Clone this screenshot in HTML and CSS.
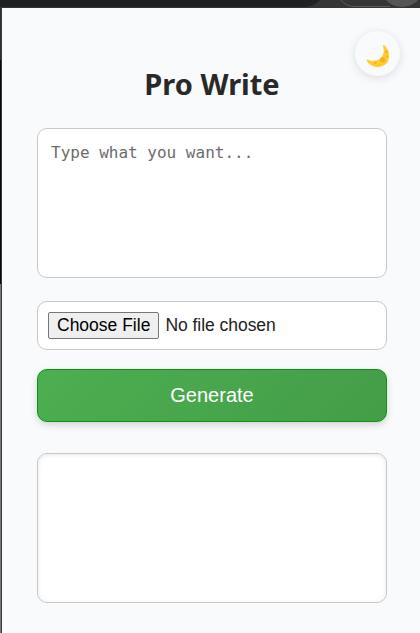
FILE: index.html
```html
<!DOCTYPE html>
<html lang="en">
<head>
<meta charset="utf-8">
<title>Pro Write</title>
<link rel="stylesheet" href="styles.css">
</head>
<body>
<svg class="browser-bar" viewBox="0 0 420 8" aria-hidden="true">
  <rect width="420" height="8" fill="#353535"/>
  <path d="M0 0H320Q314 7 304 7H0Z" fill="#202124"/>
  <path d="M341 0Q346 6.5 354 6.5H390" fill="none" stroke="#5b5b5b"/>
  <ellipse cx="402" cy="-8" rx="19" ry="15" fill="#555"/>
</svg>
<div class="window">
  <div class="window-edge"></div>
  <main class="popup">
    <button class="theme-toggle" aria-label="Toggle theme">
      <svg viewBox="0 0 24 24" width="24" height="24">
        <path d="M18.1 1.1C25.2 7.6 24.3 17.5 18.5 21.1C12.2 25.2 3 22.3 0.7 16.5C.4 15.5 1.5 15.4 2.6 15.9C7.4 17.7 12.6 16.7 15.4 13.2C18.1 9.8 18.2 6.2 17.1 2.3C16.9 1.2 17.4.6 18.1 1.1Z" fill="#ffce2e"/>
        <g fill="#f4b321">
          <circle cx="16.7" cy="16" r="2.7"/>
          <circle cx="9.3" cy="19" r="1.6"/>
          <circle cx="20.5" cy="7.9" r="1.4"/>
          <circle cx="21" cy="12.5" r="1"/>
          <circle cx="13" cy="21" r=".8"/>
        </g>
      </svg>
    </button>
    <h1 class="title">Pro Write</h1>
    <textarea class="field prompt" placeholder="Type what you want..."></textarea>
    <input class="field upload" type="file">
    <button class="generate">Generate</button>
    <div class="field output"></div>
  </main>
</div>
</body>
</html>
```

FILE: styles.css
```css
* {
  box-sizing: border-box;
}

body {
  display: flex;
  flex-direction: column;
  height: 633px;
  margin: 0;
  overflow: hidden;
  font-family: "Liberation Sans", Arial, sans-serif;
}

.browser-bar {
  display: block;
  flex: none;
  width: 420px;
  height: 8px;
}

.window {
  display: flex;
  flex: 1;
}

.window-edge {
  width: 2px;
  background: linear-gradient(#303134 0 52px, #08090b 52px 276px, #77787b 276px);
  border-right: 1px solid #38393b;
}

.popup {
  position: relative;
  display: flex;
  flex: 1;
  flex-direction: column;
  padding: 52px 33px 0 35px;
  background: #f9fafc;
}

.theme-toggle {
  position: absolute;
  top: 23px;
  right: 20px;
  display: flex;
  align-items: center;
  justify-content: center;
  width: 45px;
  height: 45px;
  padding: 5px 0 0;
  border: 0;
  border-radius: 50%;
  background: #f9fafc;
  box-shadow: 0 2px 10px rgba(0, 0, 0, 0.12);
}

.title {
  height: 48px;
  margin: 0 0 20px;
  color: #292929;
  font: 700 29px/48px "Noto Sans", sans-serif;
  text-align: center;
}

.field {
  display: block;
  flex: none;
  width: 100%;
  margin: 0;
  border: 1px solid #c8c8c8;
  border-radius: 10px;
  background: #fff;
}

.prompt {
  height: 150px;
  padding: 14px 13px;
  font: 16px/20px "DejaVu Sans Mono", monospace;
  resize: none;
}

.prompt::placeholder {
  color: #6c6c6c;
}

.upload {
  height: 49px;
  margin-top: 23px;
  padding: 10px;
  color: #222;
  font: 17.5px/21px "Liberation Sans", Arial, sans-serif;
  letter-spacing: -0.04px;
}

.upload::file-selector-button {
  height: 27px;
  margin: 0 6px 0 0;
  padding: 1px 8px;
  border: 1px solid #767676;
  border-radius: 2px;
  background: #efefef;
  color: #000;
  font: inherit;
}

.generate {
  flex: none;
  height: 53px;
  margin-top: 19px;
  padding: 0;
  border: 1px solid #0b940f;
  border-radius: 10px;
  background: linear-gradient(135deg, #4caf50, #449d48);
  box-shadow: 0 3px 7px rgba(0, 0, 0, 0.16);
  color: #fff;
  font: 20px/51px "Liberation Sans", Arial, sans-serif;
}

.output {
  height: 150px;
  margin-top: 31px;
  box-shadow: inset 0 1px 5px rgba(0, 0, 0, 0.09);
}
```
